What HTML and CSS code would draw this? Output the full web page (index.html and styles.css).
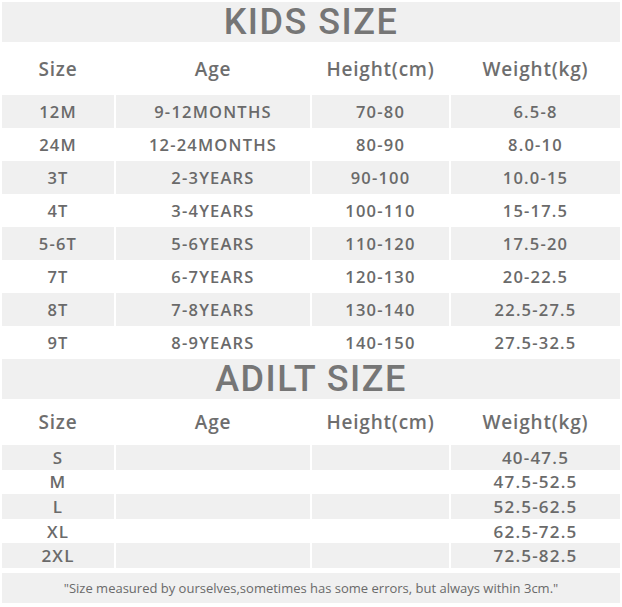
FILE: index.html
```html
<!DOCTYPE html>
<html>
<head>
<meta charset="utf-8">
<link rel="stylesheet" href="styles.css">
</head>
<body>
<div class="chart">
  <div class="title">KIDS SIZE</div>
  <div class="row head kids-head">
    <div class="cell">Size</div><div class="cell">Age</div><div class="cell">Height(cm)</div><div class="cell">Weight(kg)</div>
  </div>
  <div class="row kid gray"><div class="cell">12M</div><div class="cell">9-12MONTHS</div><div class="cell">70-80</div><div class="cell">6.5-8</div></div>
  <div class="row kid"><div class="cell">24M</div><div class="cell">12-24MONTHS</div><div class="cell">80-90</div><div class="cell">8.0-10</div></div>
  <div class="row kid gray"><div class="cell">3T</div><div class="cell">2-3YEARS</div><div class="cell">90-100</div><div class="cell">10.0-15</div></div>
  <div class="row kid"><div class="cell">4T</div><div class="cell">3-4YEARS</div><div class="cell">100-110</div><div class="cell">15-17.5</div></div>
  <div class="row kid gray"><div class="cell">5-6T</div><div class="cell">5-6YEARS</div><div class="cell">110-120</div><div class="cell">17.5-20</div></div>
  <div class="row kid"><div class="cell">7T</div><div class="cell">6-7YEARS</div><div class="cell">120-130</div><div class="cell">20-22.5</div></div>
  <div class="row kid gray"><div class="cell">8T</div><div class="cell">7-8YEARS</div><div class="cell">130-140</div><div class="cell">22.5-27.5</div></div>
  <div class="row kid"><div class="cell">9T</div><div class="cell">8-9YEARS</div><div class="cell">140-150</div><div class="cell">27.5-32.5</div></div>

  <div class="title">ADILT SIZE</div>
  <div class="row head adult-head">
    <div class="cell">Size</div><div class="cell">Age</div><div class="cell">Height(cm)</div><div class="cell">Weight(kg)</div>
  </div>
  <div class="row adult gray"><div class="cell">S</div><div class="cell"></div><div class="cell"></div><div class="cell">40-47.5</div></div>
  <div class="row adult"><div class="cell">M</div><div class="cell"></div><div class="cell"></div><div class="cell">47.5-52.5</div></div>
  <div class="row adult gray"><div class="cell">L</div><div class="cell"></div><div class="cell"></div><div class="cell">52.5-62.5</div></div>
  <div class="row adult"><div class="cell">XL</div><div class="cell"></div><div class="cell"></div><div class="cell">62.5-72.5</div></div>
  <div class="row adult gray"><div class="cell">2XL</div><div class="cell"></div><div class="cell"></div><div class="cell">72.5-82.5</div></div>
  <div class="note">"Size measured by ourselves,sometimes has some errors, but always within 3cm."</div>
</div>
</body>
</html>
```
FILE: styles.css
```css
html, body {
  margin: 0;
  padding: 0;
  background: #ffffff;
}
.chart {
  width: 618px;
  padding: 2px 2px;
  font-family: "Open Sans", "Noto Sans", sans-serif;
  color: #6a6a6a;
}
.title {
  background: #f0f0f0;
  height: 40px;
  display: flex;
  align-items: center;
  justify-content: center;
  font-family: Roboto, "Open Sans", sans-serif;
  font-size: 36px;
  line-height: 40px;
  font-weight: 500;
  color: #767676;
  letter-spacing: 1.5px;
}
.row {
  display: grid;
  grid-template-columns: 112px 194px 137px 1fr;
  column-gap: 2px;
}
.cell {
  text-align: center;
  display: flex;
  align-items: center;
  justify-content: center;
  white-space: nowrap;
}
.head .cell {
  font-size: 19px;
  font-weight: 600;
  letter-spacing: 0.8px;
  color: #6e6e6e;
}
.kids-head { height: 53px; }
.adult-head { height: 46px; }
.kid { height: 33px; font-size: 16.5px; font-weight: 600; letter-spacing: 1.2px; }
.adult { height: 24.6px; font-size: 17px; font-weight: 600; letter-spacing: 1.2px; }
.gray .cell { background: #f0f0f0; }
.note {
  margin-top: 5px;
  background: #f0f0f0;
  height: 30px;
  line-height: 30px;
  text-align: center;
  font-size: 13px;
  color: #6a6a6a;
}
```
